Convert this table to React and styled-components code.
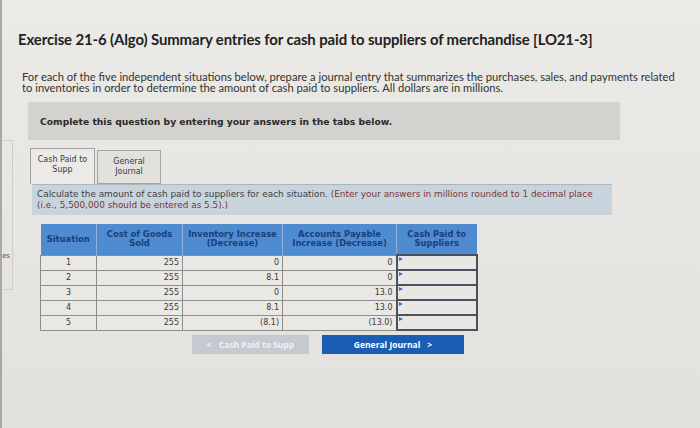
import React from "react";
import styled, { createGlobalStyle } from "styled-components";

const GlobalStyle = createGlobalStyle`
  body {
    margin: 0;
    background: #e5e4e0;
    font-family: "Open Sans", "Liberation Sans", sans-serif;
    color: #2b2b2b;
  }
`;

const Page = styled.div`
  display: flex;
  width: 700px;
  height: 428px;
  overflow: hidden;
  background: linear-gradient(180deg, #ebeae6 0%, #e6e5e1 60%, #e2e1dd 100%);
`;

const Sidebar = styled.aside`
  width: 11px;
  flex-shrink: 0;
  border-left: 2px solid #a9a8a4;
  padding-top: 140px;
`;

const SidePanel = styled.div`
  height: 150px;
  box-sizing: border-box;
  border-right: 1px solid #cfceca;
  border-top: 1px solid #d2d1cd;
  border-bottom: 1px solid #d2d1cd;
  padding-top: 111px;
`;

const SideLabel = styled.div`
  font-size: 7px;
  color: #555;
  font-family: "DejaVu Sans", sans-serif;
  white-space: nowrap;
`;

const Main = styled.main`
  flex: 1;
  padding: 30px 0 0 5px;
`;

const Title = styled.h1`
  margin: 0;
  font-family: "Lato", "Open Sans", sans-serif;
  font-weight: 700;
  font-size: 14.9px;
  letter-spacing: -0.1px;
  color: #222;
`;

const Intro = styled.p`
  margin: 23px 0 0 4px;
  font-family: "Lato", "Open Sans", sans-serif;
  font-size: 11.2px;
  line-height: 11px;
  color: #333;
  width: 664px;
`;

const Notice = styled.div`
  margin: 9px 0 0 10px;
  width: 580px;
  height: 38px;
  background: #d3d2ce;
  display: flex;
  align-items: center;
  padding-left: 12px;
  font-family: "DejaVu Sans", sans-serif;
  font-weight: 700;
  font-size: 9.2px;
  color: #2a2a2a;
`;

const Tabs = styled.div`
  display: flex;
  gap: 2px;
  margin: 8px 0 0 12px;
  align-items: flex-end;
`;

const Tab = styled.div`
  width: ${(p) => (p.$active ? 65 : 64)}px;
  height: ${(p) => (p.$active ? 36 : 34)}px;
  box-sizing: border-box;
  border: 1px solid #a3a29e;
  border-bottom: ${(p) => (p.$active ? "none" : "1px solid #a3a29e")};
  background: ${(p) => (p.$active ? "#eceae6" : "#e2e1dc")};
  font-family: "DejaVu Sans", sans-serif;
  font-size: 8px;
  line-height: 10px;
  color: #3a3a3a;
  text-align: center;
  padding-top: 6px;
`;

const Instruction = styled.div`
  margin-left: 14px;
  width: 580px;
  height: 31px;
  box-sizing: border-box;
  background: #c8d4dc;
  border-top: 1px solid #a8b6c0;
  padding: 4px 0 0 5px;
  font-family: "DejaVu Sans", sans-serif;
  font-size: 8.9px;
  line-height: 10.5px;
  color: #3a3d44;
  white-space: nowrap;
`;

const Red = styled.span`
  color: #7a3535;
`;

const Table = styled.table`
  margin: 9px 0 0 22px;
  border-collapse: collapse;
  font-family: "DejaVu Sans", sans-serif;
  font-size: 8px;
`;

const Th = styled.th`
  background: #4f8bd0;
  color: #18407a;
  font-weight: 700;
  font-size: 8.4px;
  height: 31px;
  box-sizing: border-box;
  width: ${(p) => p.$w}px;
  padding: 0 2px;
  line-height: 9.5px;
  border-left: 1px solid #8fb0d8;
  &:first-child {
    border-left: none;
  }
`;

const Td = styled.td`
  height: 13px;
  padding: 0 3px;
  border: 1px solid #8f8e8a;
  background: #e9e8e4;
  color: #3a3a3a;
  text-align: ${(p) => (p.$center ? "center" : "right")};
`;

const InputCell = styled.td`
  height: 13px;
  padding: 0;
  border: 2px solid #4a5160;
  background: #e8e7e3;
  position: relative;
  &::before {
    content: "";
    position: absolute;
    left: 1px;
    top: 1px;
    border-left: 4px solid #3d6fb5;
    border-top: 2px solid transparent;
    border-bottom: 2px solid transparent;
  }
`;

const Nav = styled.div`
  display: flex;
  gap: 13px;
  margin: 4px 0 0 174px;
`;

const NavButton = styled.button`
  height: 19px;
  width: ${(p) => p.$w}px;
  border: none;
  background: ${(p) => (p.$primary ? "#1b5db3" : "#c5cad1")};
  color: ${(p) => (p.$primary ? "#ffffff" : "#eef1f5")};
  font-family: "Open Sans", "Liberation Sans", sans-serif;
  font-weight: 700;
  font-size: 8.5px;
  display: flex;
  align-items: center;
  justify-content: center;
  gap: 7px;
  padding: 0;
`;

const rows = [
  ["1", "255", "0", "0"],
  ["2", "255", "8.1", "0"],
  ["3", "255", "0", "13.0"],
  ["4", "255", "8.1", "13.0"],
  ["5", "255", "(8.1)", "(13.0)"],
];

export default function App() {
  return (
    <>
      <GlobalStyle />
      <Page>
        <Sidebar>
          <SidePanel>
            <SideLabel>es</SideLabel>
          </SidePanel>
        </Sidebar>
        <Main>
          <Title>
            Exercise 21-6 (Algo) Summary entries for cash paid to suppliers of
            merchandise [LO21-3]
          </Title>
          <Intro>
            For each of the five independent situations below, prepare a journal
            entry that summarizes the purchases, sales, and payments related to
            inventories in order to determine the amount of cash paid to
            suppliers. All dollars are in millions.
          </Intro>
          <Notice>Complete this question by entering your answers in the tabs below.</Notice>
          <Tabs>
            <Tab $active>
              Cash Paid to
              <br />
              Supp
            </Tab>
            <Tab>
              General
              <br />
              Journal
            </Tab>
          </Tabs>
          <Instruction>
            Calculate the amount of cash paid to suppliers for each situation.{" "}
            <Red>
              (Enter your answers in millions rounded to 1 decimal place
              <br />
              (i.e., 5,500,000 should be entered as 5.5).)
            </Red>
          </Instruction>
          <Table>
            <thead>
              <tr>
                <Th $w={56}>Situation</Th>
                <Th $w={86}>
                  Cost of Goods
                  <br />
                  Sold
                </Th>
                <Th $w={100}>
                  Inventory Increase
                  <br />
                  (Decrease)
                </Th>
                <Th $w={114}>
                  Accounts Payable
                  <br />
                  Increase (Decrease)
                </Th>
                <Th $w={80}>
                  Cash Paid to
                  <br />
                  Suppliers
                </Th>
              </tr>
            </thead>
            <tbody>
              {rows.map((r) => (
                <tr key={r[0]}>
                  <Td $center>{r[0]}</Td>
                  <Td>{r[1]}</Td>
                  <Td>{r[2]}</Td>
                  <Td>{r[3]}</Td>
                  <InputCell />
                </tr>
              ))}
            </tbody>
          </Table>
          <Nav>
            <NavButton $w={117}>
              <span>&lt;</span> Cash Paid to Supp
            </NavButton>
            <NavButton $w={142} $primary>
              General Journal <span>&gt;</span>
            </NavButton>
          </Nav>
        </Main>
      </Page>
    </>
  );
}
